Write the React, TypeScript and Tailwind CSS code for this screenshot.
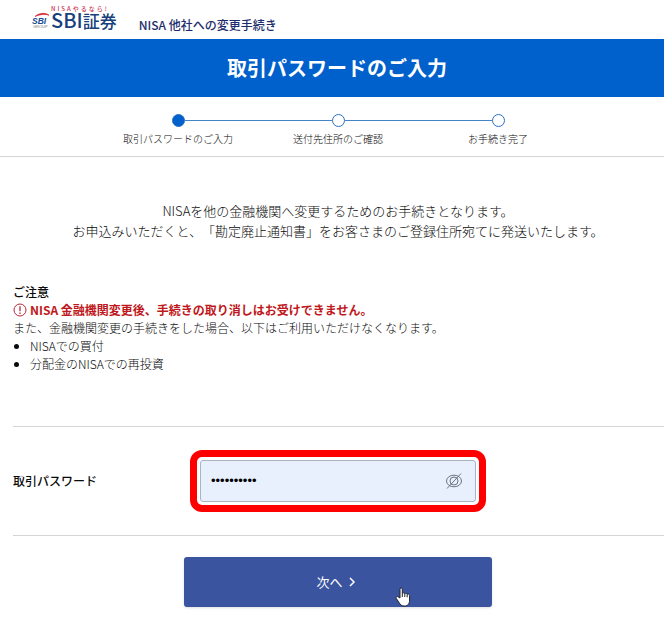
import React from "react";

const steps = [
  { label: "取引パスワードのご入力", current: true },
  { label: "送付先住所のご確認", current: false },
  { label: "お手続き完了", current: false },
];

function Logo() {
  return (
    <a href="#" aria-label="SBI証券" className="flex items-end">
      <svg viewBox="0 0 18 17" className="h-[17px] w-[18px]" aria-hidden="true">
        <path d="M3 4.5C7 1 13 .2 17 3.2C13 1.8 8 2.2 3 4.5Z" fill="#d8232f" stroke="#d8232f" strokeWidth=".6" />
        <text x="0" y="11.5" fontSize="8.5" fontWeight="900" fontStyle="italic" fontFamily="Liberation Sans, sans-serif" fill="#17498f">
          SBI
        </text>
        <text x="1" y="16" fontSize="4" fontFamily="Liberation Sans, sans-serif" fill="#777777">
          GROUP
        </text>
      </svg>
      <span className="ml-px flex flex-col">
        <span className="text-[6px] leading-[6px] font-medium tracking-[2px] text-[#c8324f]">NISAやるなら!</span>
        <span className="flex items-baseline leading-[16px] font-medium text-[#17407c]">
          <span className="text-[20px]">SBI</span>
          <span className="text-[17px]">証券</span>
        </span>
      </span>
    </a>
  );
}

function Stepper() {
  return (
    <ol className="flex justify-center border-b border-[#d4d4d4] pt-[17px] pb-[10px] pl-3">
      {steps.map((step, i) => (
        <li key={step.label} className="flex w-40 flex-col items-center">
          <div className="flex w-full items-center">
            <span className={`h-px flex-1 ${i > 0 ? "bg-[#4384c4]" : ""}`} />
            <span className={`size-[13px] rounded-full border border-[#2a6fc4] ${step.current ? "bg-[#0060cc]" : "bg-white"}`} />
            <span className={`h-px flex-1 ${i < steps.length - 1 ? "bg-[#4384c4]" : ""}`} />
          </div>
          <span className="mt-[5px] text-[10px] leading-[14px]">{step.label}</span>
        </li>
      ))}
    </ol>
  );
}

function AlertIcon() {
  return (
    <svg viewBox="0 0 14 14" className="size-[14px]" fill="none" stroke="#b8283c" aria-hidden="true">
      <circle cx="7" cy="7" r="6" />
      <path d="M7 3.2V8.2M7 9.5V11" strokeWidth="1.3" />
    </svg>
  );
}

function EyeOffIcon() {
  return (
    <svg viewBox="0 0 18 18" className="size-[18px]" fill="none" stroke="#6b7482" aria-hidden="true">
      <ellipse cx="9" cy="9" rx="7.5" ry="5.8" />
      <circle cx="9" cy="9" r="4" />
      <path d="M2 16.5L16 1.5" />
    </svg>
  );
}

function HandCursor() {
  return (
    <svg viewBox="0 0 16 20" className="pointer-events-none absolute top-[30px] right-[81px] h-5 w-4" aria-hidden="true">
      <path
        d="M5 11V2.2C5 .5 7.3 .5 7.3 2.2V6.5C8 5.4 9.6 5.7 9.8 6.8C10.6 5.9 12 6.3 12.2 7.4C13.2 6.7 14.6 7.2 14.6 8.6V13C14.6 16.5 13 19 9.5 19C6.5 19 5.2 17.8 4 15.5L1.2 11.3C.4 9.9 2.2 8.9 3.2 9.9Z"
        fill="#ffffff"
        stroke="#20242f"
      />
      <path d="M7.3 6.5V10M9.8 6.8V10M12.2 7.4V10.3" stroke="#20242f" fill="none" />
    </svg>
  );
}

export default function App() {
  return (
    <div className="bg-white font-['Noto_Sans_CJK_JP','Noto_Sans',sans-serif] font-light text-[#0a0a0a] [text-spacing-trim:space-all]">
      <header className="flex h-[39px] items-end pl-8">
        <div className="mb-[10px]">
          <Logo />
        </div>
        <p className="mb-[5px] ml-[22px] text-[12px] leading-[18px] font-medium text-[#1d2d6b]">NISA 他社への変更手続き</p>
      </header>

      <div className="bg-[#0060cc] py-[14px] pl-[10px]">
        <h1 className="text-center text-[20px] leading-[30px] font-bold text-white">取引パスワードのご入力</h1>
      </div>

      <Stepper />

      <main className="pl-3">
        <p className="mt-[44px] text-center text-[13px] leading-5">
          NISAを他の金融機関へ変更するためのお手続きとなります。
          <br />
          お申込みいただくと、「勘定廃止通知書」をお客さまのご登録住所宛てに発送いたします。
        </p>

        <section className="mt-[42px] pl-px text-[12px] leading-[18px]">
          <h2 className="font-medium">ご注意</h2>
          <p className="flex items-center gap-[3px] font-bold text-[#c01820]">
            <AlertIcon />
            NISA 金融機関変更後、手続きの取り消しはお受けできません。
          </p>
          <p>また、金融機関変更の手続きをした場合、以下はご利用いただけなくなります。</p>
          <ul className="list-disc pl-[17px]">
            <li>NISAでの買付</li>
            <li>分配金のNISAでの再投資</li>
          </ul>
        </section>

        <form onSubmit={(e) => e.preventDefault()}>
          <div className="mt-[53px] ml-px flex items-center border-y border-[#d4d4d4] py-[23px]">
            <label htmlFor="password" className="w-[177px] text-[12px] leading-[18px] font-medium">
              取引パスワード
            </label>
            <div className="w-[296px] rounded-[12px] border-[7px] border-[#ff0000] p-[3px]">
              <div className="flex h-[42px] items-center rounded-[3px] border border-[#aab4c0] bg-[#e8f0fe] pr-3 pl-[10px]">
                <input
                  id="password"
                  type="password"
                  defaultValue="password12"
                  className="min-w-0 flex-1 bg-transparent font-['Liberation_Sans',sans-serif] text-[13px] text-black outline-none"
                />
                <button type="button" aria-label="パスワードを表示">
                  <EyeOffIcon />
                </button>
              </div>
            </div>
          </div>

          <div className="flex justify-center pt-[21px] pb-[10px]">
            <div className="relative">
              <button
                type="submit"
                className="flex h-[50px] w-[308px] items-center justify-center gap-[5px] rounded-[3px] bg-[#3b549f] pr-1 text-[13px] font-normal text-white shadow-sm"
              >
                次へ
                <svg viewBox="0 0 8 10" className="h-[10px] w-2" fill="none" stroke="currentColor" strokeWidth="1.5" aria-hidden="true">
                  <path d="M2 1L6 5L2 9" />
                </svg>
              </button>
              <HandCursor />
            </div>
          </div>
        </form>
      </main>
    </div>
  );
}
